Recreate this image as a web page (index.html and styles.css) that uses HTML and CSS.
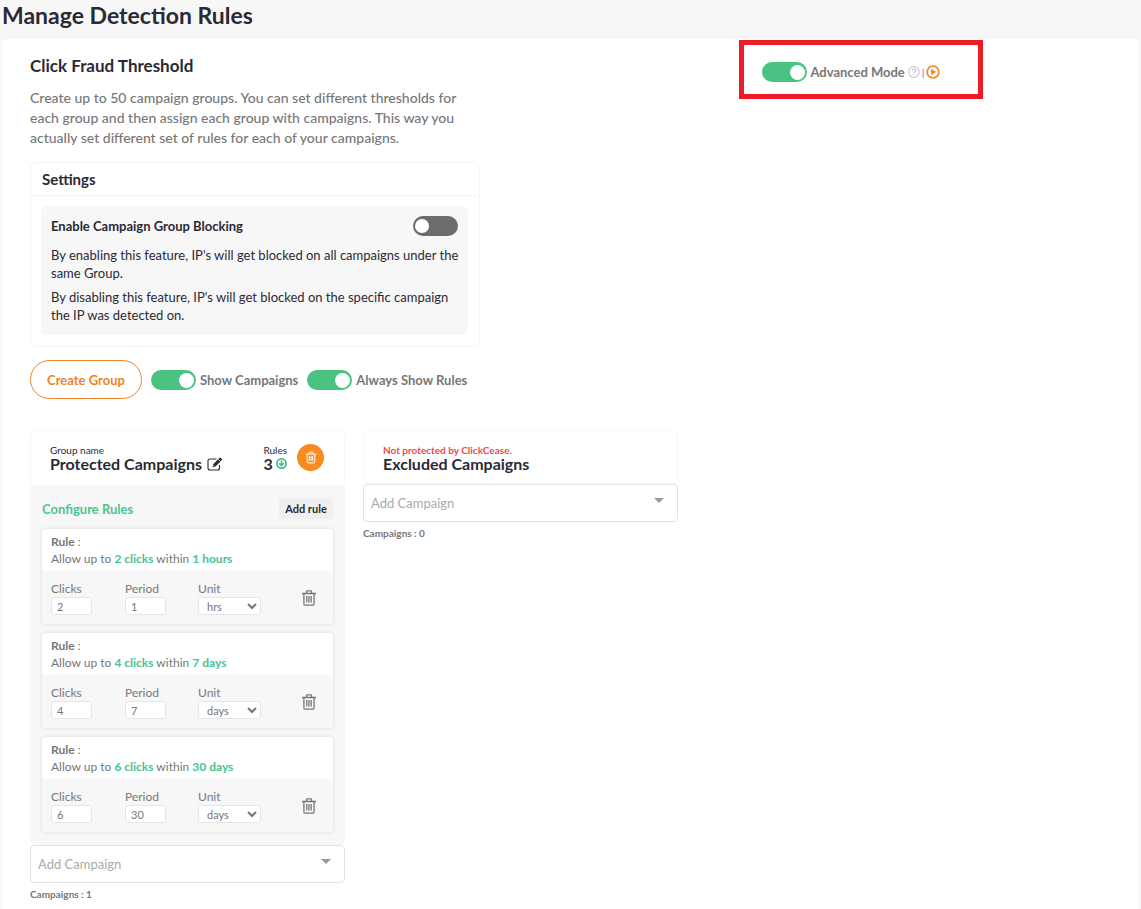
FILE: index.html
```
<!DOCTYPE html>
<html lang="en">
<head>
    <meta charset="UTF-8">
    <meta name="viewport" content="width=device-width, initial-scale=1.0">
    <title>Manage Detection Rules</title>
    <link rel="stylesheet" href="styles.css">
</head>
<body>
    <svg class="sprite" aria-hidden="true">
        <symbol id="trash" viewBox="0 0 16 16">
            <path d="M1 3.5h14M5.5 3.2V1.6q0-.8.8-.8h3.4q.8 0 .8.8v1.6M2.9 3.5v10.6q0 1.1 1.1 1.1h8q1.1 0 1.1-1.1V3.5M5.8 6v6.6M8 6v6.6M10.2 6v6.6" fill="none" stroke="currentColor" stroke-width="1.3"/>
        </symbol>
    </svg>
    <h1>Manage Detection Rules</h1>
    <main class="panel">
        <div class="top">
            <section class="intro">
                <h2>Click Fraud Threshold</h2>
                <p class="description">Create up to 50 campaign groups. You can set different thresholds for each group and then assign each group with campaigns. This way you actually set different set of rules for each of your campaigns.</p>
                <div class="settings">
                    <h3>Settings</h3>
                    <div class="settings-box">
                        <div class="settings-row">
                            <label for="groupBlocking">Enable Campaign Group Blocking</label>
                            <input type="checkbox" class="toggle" id="groupBlocking">
                        </div>
                        <p>By enabling this feature, IP's will get blocked on all campaigns under the same Group.</p>
                        <p>By disabling this feature, IP's will get blocked on the specific campaign the IP was detected on.</p>
                    </div>
                </div>
            </section>
            <div class="mode">
                <input type="checkbox" class="toggle" id="advancedMode" checked>
                <label for="advancedMode">Advanced Mode</label>
                <div class="mode-icons">
                    <svg class="help" viewBox="0 0 12 12">
                        <circle cx="6" cy="6" r="5.3" fill="none" stroke="currentColor" stroke-width="1.2"/>
                        <path d="M4.2 4.7q.1-1.6 1.8-1.6t1.8 1.4q0 .8-.9 1.3-.8.4-.8 1.2M6.1 8v1.2" fill="none" stroke="currentColor" stroke-width="1.4"/>
                    </svg>
                    <span class="divider">|</span>
                    <a href="#" class="play" aria-label="Watch video">
                        <svg viewBox="0 0 14 14">
                            <circle cx="7" cy="7" r="5.9" fill="none" stroke="currentColor" stroke-width="1.8"/>
                            <path d="M5 3.8L10.4 7 5 10.2z" fill="currentColor"/>
                        </svg>
                    </a>
                </div>
            </div>
        </div>

        <div class="actions">
            <button type="button" class="create-btn">Create Group</button>
            <div class="switch">
                <input type="checkbox" class="toggle" id="showCampaigns" checked>
                <label for="showCampaigns">Show Campaigns</label>
            </div>
            <div class="switch">
                <input type="checkbox" class="toggle" id="showRules" checked>
                <label for="showRules">Always Show Rules</label>
            </div>
        </div>

        <div class="groups">
            <section class="group">
                <div class="group-header">
                    <div class="group-name">
                        <small>Group name</small>
                        <h4>Protected Campaigns
                            <svg class="edit" viewBox="0 0 16 14">
                                <path d="M9.5 2H3Q1 2 1 4v7q0 2 2 2h7.5q2 0 2-2V8" fill="none" stroke="currentColor" stroke-width="1.1"/>
                                <path d="M5.5 10.2l.7-3L12.6.8q.5-.5 1 0l1.3 1.3q.5.5 0 1L8.5 9.5z" fill="currentColor"/>
                                <path d="M6.5 8.2l1.1 1.1M11.3 2.3l2.2 2.2" stroke="#fff" stroke-width=".7"/>
                            </svg>
                        </h4>
                    </div>
                    <div class="rule-count">
                        <small>Rules</small>
                        <h4>3
                            <svg class="arrow" viewBox="0 0 11 11">
                                <circle cx="5.5" cy="5.5" r="4.6" fill="none" stroke="currentColor" stroke-width="1.8"/>
                                <path d="M5.5 2.6v5M3.2 5.2l2.3 2.4 2.3-2.4" fill="none" stroke="currentColor" stroke-width="1.6"/>
                            </svg>
                        </h4>
                    </div>
                    <button type="button" class="delete-group" aria-label="Delete group"><svg><use href="#trash"/></svg></button>
                </div>
                <div class="rules">
                    <div class="rules-header">
                        <h5>Configure Rules</h5>
                        <button type="button" class="add-rule">Add rule</button>
                    </div>
                    <div class="rule">
                        <div class="rule-text">
                            <p><b>Rule</b> :</p>
                            <p>Allow up to <strong>2 clicks</strong> within <strong>1 hours</strong></p>
                        </div>
                        <div class="rule-form">
                            <label class="field">Clicks<input type="text" value="2"></label>
                            <label class="field">Period<input type="text" value="1"></label>
                            <label class="field">Unit
                                <select><option selected>hrs</option><option>days</option></select>
                            </label>
                            <button type="button" class="delete-rule" aria-label="Delete rule"><svg><use href="#trash"/></svg></button>
                        </div>
                    </div>
                    <div class="rule">
                        <div class="rule-text">
                            <p><b>Rule</b> :</p>
                            <p>Allow up to <strong>4 clicks</strong> within <strong>7 days</strong></p>
                        </div>
                        <div class="rule-form">
                            <label class="field">Clicks<input type="text" value="4"></label>
                            <label class="field">Period<input type="text" value="7"></label>
                            <label class="field">Unit
                                <select><option>hrs</option><option selected>days</option></select>
                            </label>
                            <button type="button" class="delete-rule" aria-label="Delete rule"><svg><use href="#trash"/></svg></button>
                        </div>
                    </div>
                    <div class="rule">
                        <div class="rule-text">
                            <p><b>Rule</b> :</p>
                            <p>Allow up to <strong>6 clicks</strong> within <strong>30 days</strong></p>
                        </div>
                        <div class="rule-form">
                            <label class="field">Clicks<input type="text" value="6"></label>
                            <label class="field">Period<input type="text" value="30"></label>
                            <label class="field">Unit
                                <select><option>hrs</option><option selected>days</option></select>
                            </label>
                            <button type="button" class="delete-rule" aria-label="Delete rule"><svg><use href="#trash"/></svg></button>
                        </div>
                    </div>
                </div>
                <div class="campaign-select">
                    <select aria-label="Add Campaign"><option>Add Campaign</option></select>
                </div>
                <p class="campaign-count">Campaigns : 1</p>
            </section>

            <section class="group">
                <div class="group-header excluded">
                    <div class="group-name">
                        <small>Not protected by ClickCease.</small>
                        <h4>Excluded Campaigns</h4>
                    </div>
                </div>
                <div class="campaign-select">
                    <select aria-label="Add Campaign"><option>Add Campaign</option></select>
                </div>
                <p class="campaign-count">Campaigns : 0</p>
            </section>
        </div>
    </main>
</body>
</html>
```
FILE: styles.css
```
* {
    box-sizing: border-box;
}

body {
    margin: 0;
    min-height: 100vh;
    display: flex;
    flex-direction: column;
    font-family: Lato, "Open Sans", sans-serif;
    font-size: 13px;
    background: #f7f7f7;
    color: #2a2a35;
}

h1, h2, h3, h4, h5, p {
    margin: 0;
}

button, input, select {
    font-family: inherit;
    color: inherit;
}

button {
    cursor: pointer;
    border: none;
    padding: 0;
}

.sprite {
    display: none;
}

h1 {
    padding: 0 2px 9px;
    font-size: 23px;
    line-height: 30px;
}

.panel {
    flex: 1;
    margin: 0 2px;
    padding: 0 28px 8px;
    background: #fff;
    border-radius: 6px 6px 0 0;
}

/* Intro and settings */
.top {
    display: grid;
    grid-template-columns: 21fr 11fr;
    align-items: start;
}

.intro {
    max-width: 450px;
    padding-top: 16px;
}

h2 {
    font-size: 17px;
    line-height: 22px;
}

.description {
    padding: 11px 0 14px;
    font-size: 14px;
    font-weight: 500;
    line-height: 20px;
    color: #777;
}

.settings {
    border: 1px solid #f5f5f5;
    border-radius: 6px;
}

.settings h3 {
    padding: 0 11px;
    font-size: 15px;
    line-height: 32px;
    border-bottom: 1px solid #f5f5f5;
}

.settings-box {
    margin: 10px 11px 11px 10px;
    padding: 10px 0 11px 10px;
    background: #f7f7f7;
    border-radius: 6px;
    line-height: 18px;
}

.settings-row {
    display: flex;
    justify-content: space-between;
    align-items: center;
    padding-right: 10px;
    font-weight: bold;
}

.settings-box p {
    margin-top: 6px;
}

.settings-row + p {
    margin-top: 10px;
}

/* Toggle switch */
.toggle {
    appearance: none;
    flex: none;
    width: 45px;
    height: 20px;
    margin: 0;
    padding: 3px 2px;
    display: flex;
    border-radius: 10px;
    background: #6c6c6c;
    cursor: pointer;
}

.toggle::before {
    content: "";
    width: 14px;
    height: 14px;
    border-radius: 50%;
    background: #fff;
}

.toggle:checked {
    justify-content: flex-end;
    background: #4ac282;
}

.toggle:checked::before {
    width: 15px;
    height: 15px;
}

.mode {
    display: flex;
    align-items: center;
    gap: 3px;
    width: 244px;
    height: 59px;
    margin-top: 1px;
    padding: 5px 18px 0;
    border: 5px solid #ed1c24;
    font-weight: bold;
    color: #777;
}

.mode-icons {
    display: flex;
    align-items: center;
    gap: 2px;
}

.help {
    width: 12px;
    height: 12px;
    color: #ccc;
}

.divider {
    font-size: 10px;
    color: #5aa5e0;
}

.play {
    display: flex;
    color: #f78b1f;
}

.play svg {
    width: 14px;
    height: 14px;
}

/* Actions */
.actions {
    display: flex;
    align-items: center;
    gap: 9px;
    padding: 13px 0 31px;
    font-weight: bold;
}

.create-btn {
    width: 112px;
    height: 39px;
    border: 1px solid #f08326;
    border-radius: 20px;
    background: #fff;
    color: #f08326;
    font-size: 13px;
    font-weight: bold;
}

.switch {
    display: flex;
    align-items: center;
    gap: 4px;
    color: #777;
}

/* Campaign groups */
.groups {
    display: flex;
    align-items: flex-start;
    gap: 18px;
}

.group {
    flex: 0 1 315px;
}

.group-header {
    display: flex;
    height: 56px;
    padding: 13px 20px 0 19px;
    border: 1px solid #f7f7f7;
    border-radius: 6px;
}

.group-header small {
    display: block;
    font-size: 10px;
    line-height: 12px;
}

.group-header h4 {
    display: flex;
    align-items: center;
    font-size: 16px;
    line-height: 15px;
}

.group-name {
    flex: 1;
}

.edit {
    width: 16px;
    height: 14px;
    margin-left: 5px;
}

.arrow {
    width: 11px;
    height: 11px;
    margin-left: 3px;
    color: #45c08b;
}

.delete-group {
    display: flex;
    align-items: center;
    justify-content: center;
    width: 27px;
    height: 27px;
    margin-left: 10px;
    border-radius: 50%;
    background: #f78b1f;
    color: #fff;
}

.delete-group svg {
    width: 12px;
    height: 13px;
}

.excluded {
    height: 54px;
}

.excluded small {
    font-weight: bold;
    color: #e84c4c;
}

.rules {
    display: flex;
    flex-direction: column;
    gap: 9px;
    padding: 12px 12px 13px;
    background: #f7f7f7;
    border-radius: 0 0 6px 6px;
}

.rules-header {
    display: flex;
    align-items: center;
    justify-content: space-between;
    padding-bottom: 1px;
}

.rules-header h5 {
    font-size: 13px;
    color: #4bc491;
}

.add-rule {
    width: 54px;
    height: 21px;
    border-radius: 4px;
    background: #efefef;
    font-size: 11px;
    font-weight: bold;
}

.rule {
    border-radius: 4px;
    box-shadow: 0 0 4px rgba(0, 0, 0, 0.12);
    font-size: 12px;
    line-height: 17px;
    color: #777;
}

.rule-text {
    padding: 4px 9px;
    background: #fff;
    border-radius: 4px 4px 0 0;
}

.rule-text strong {
    color: #45c495;
}

.rule-form {
    display: grid;
    grid-template-columns: 74px 73px 1fr 16px;
    padding: 9px 16px 9px 9px;
}

.field {
    display: flex;
    flex-direction: column;
    align-items: flex-start;
}

.field input {
    width: 41px;
    height: 18px;
    padding: 0 5px;
    border: 1px solid #e6e6e6;
    border-radius: 3px;
    background: #fff;
    font-size: 11px;
}

.field select {
    width: 63px;
    height: 18px;
    padding: 0 4px;
    border: 1px solid #e6e6e6;
    border-radius: 3px;
    background: #fff;
    font-size: 11px;
}

.delete-rule {
    align-self: center;
    background: none;
    line-height: 0;
}

.delete-rule svg {
    width: 16px;
    height: 16px;
}

.campaign-select {
    position: relative;
}

.campaign-select select {
    appearance: none;
    display: block;
    width: 100%;
    height: 38px;
    padding: 0 7px;
    border: 1px solid #e2e2e2;
    border-radius: 4px;
    background: #fff;
    font-size: 13px;
    color: #aaa;
}

.campaign-select::after {
    content: "";
    position: absolute;
    top: 14px;
    right: 14px;
    border: 5px solid transparent;
    border-top-color: #999;
    border-bottom: none;
    pointer-events: none;
}

.campaign-count {
    padding-top: 4px;
    font-size: 10px;
    font-weight: bold;
    line-height: 15px;
    color: #777;
}
```
